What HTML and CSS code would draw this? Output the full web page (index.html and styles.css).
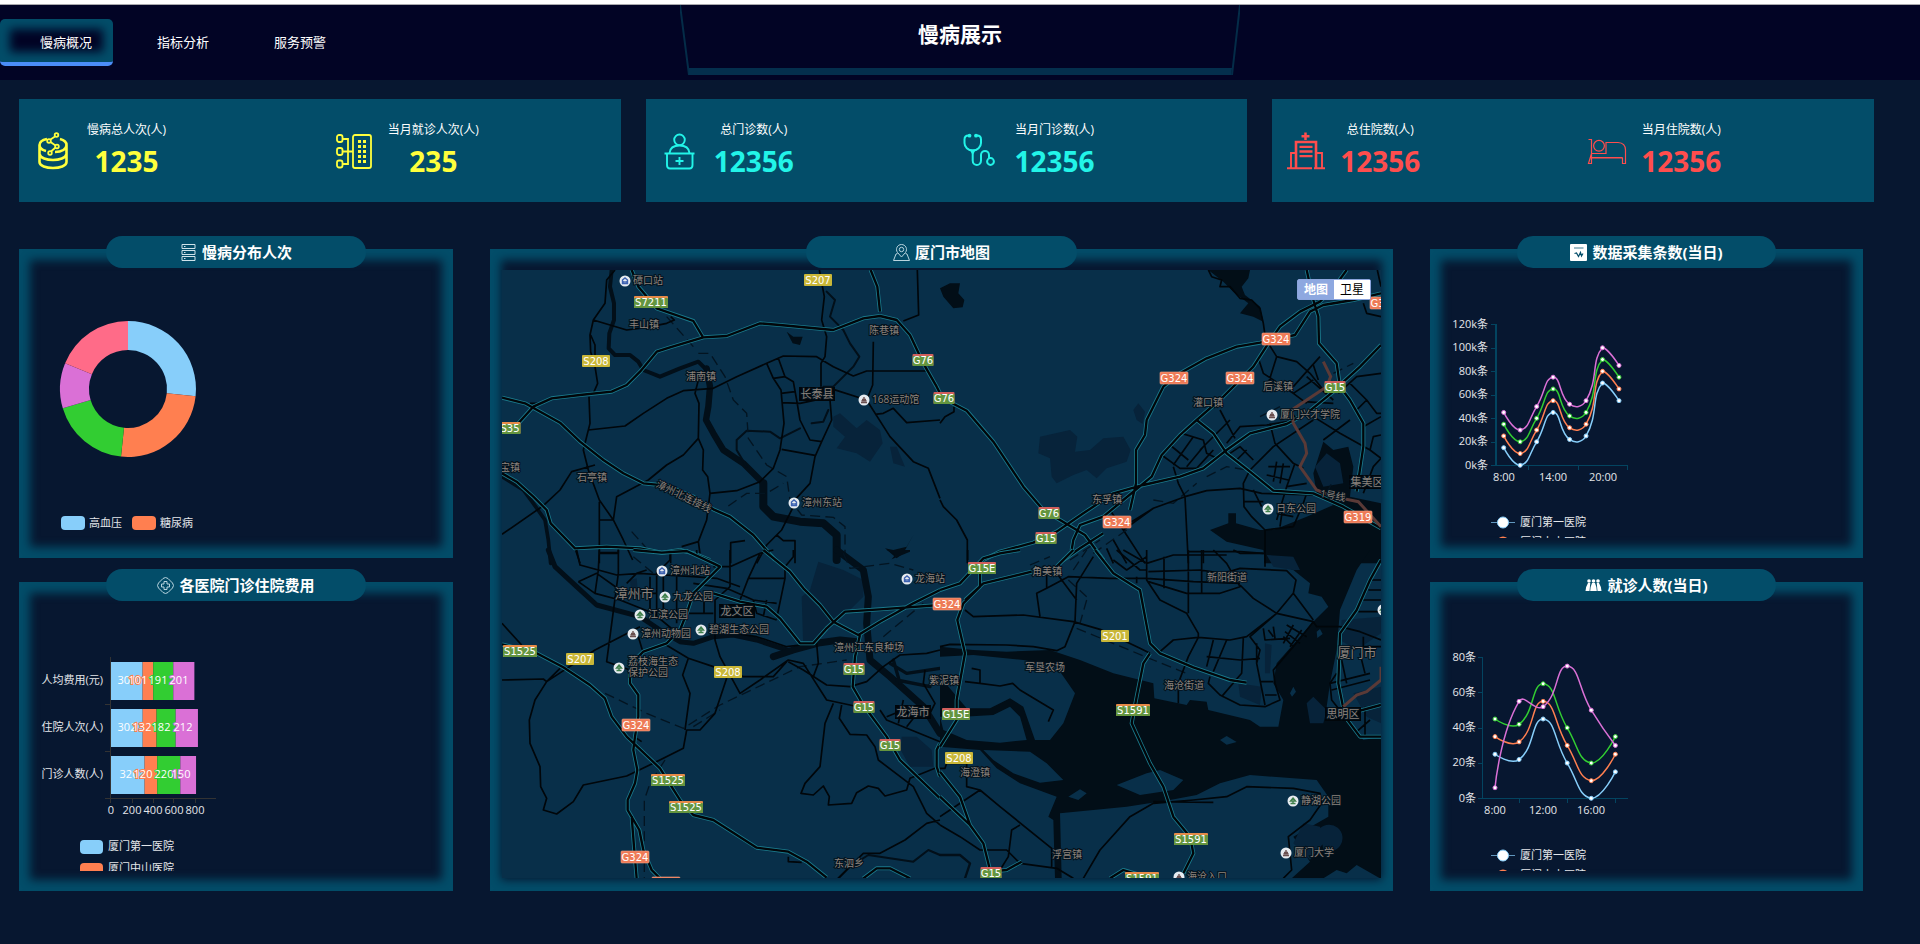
FILE: index.html
```html
<!DOCTYPE html>
<html lang="zh-CN">
<head>
<meta charset="utf-8">
<title>慢病展示</title>
<link rel="stylesheet" href="styles.css">
</head>
<body>
<header class="header">
  <nav class="nav">
    <a class="nav-item active" href="#overview">慢病概况</a>
    <a class="nav-item" href="#analysis">指标分析</a>
    <a class="nav-item" href="#warning">服务预警</a>
  </nav>
  <div class="banner">
    <svg class="banner-frame" viewBox="0 0 560 70" aria-hidden="true">
      <path d="M0 0 9 70M560 0 552 70" fill="none" stroke="#042c48" stroke-width="2"/>
      <path d="M9 63H552L551 70H9Z" fill="#042f4d"/>
    </svg>
    <h1 class="banner-title">慢病展示</h1>
  </div>
</header>

<main>
  <section class="stats">
    <div class="stat-card yellow">
      <div class="stat">
        <svg class="stat-icon" viewBox="0 0 40 40"><g fill="none" stroke="currentColor" stroke-width="2.6"><path d="M6.500 14V31C6.500 39 33.500 39 33.500 31V14M6.500 23C8 31 32 31 33.500 23M14 8C9 9 6.500 11 6.500 14 6.500 17 9 19 13 20M27 8C31 9 33.500 11 33.500 14 33.500 18 29 21 22 21"/><g stroke-width="1.800"><circle cx="23.500" cy="4" r="1.800"/><circle cx="16" cy="10" r="1.800"/><circle cx="24" cy="15.500" r="1.800"/><circle cx="17" cy="22" r="1.800"/><path d="M22 5.500 17.500 8.500M17.500 11 22.500 14.500M22.500 16.500 18 20.500"/></g></g></svg>
        <div class="stat-text"><span class="stat-label">慢病总人次(人)</span><strong class="stat-value">1235</strong></div>
      </div>
      <div class="stat">
        <svg class="stat-icon" viewBox="0 0 40 40"><g fill="none" stroke="currentColor" stroke-width="1.800"><rect x="19" y="4" width="18" height="33" rx="2"/><rect x="3" y="4" width="5.500" height="7" rx="2"/><rect x="3" y="17" width="5.500" height="7" rx="2"/><rect x="3" y="29.500" width="5.500" height="7" rx="2"/><path d="M8.500 8H14V33H8.500M8.500 20.500H19"/></g><path d="M24 9h3v3h-3zM29 9h3v3h-3zM24 14h3v3h-3zM29 14h3v3h-3zM24 19h3v3h-3zM29 19h3v3h-3zM24 24h3v3h-3zM29 24h3v3h-3zM24 29h3v3h-3zM29 29h3v3h-3z" fill="currentColor"/></svg>
        <div class="stat-text"><span class="stat-label">当月就诊人次(人)</span><strong class="stat-value">235</strong></div>
      </div>
    </div>
    <div class="stat-card cyan">
      <div class="stat">
        <svg class="stat-icon" viewBox="0 0 40 40"><g fill="none" stroke="currentColor" stroke-width="1.900"><circle cx="19.500" cy="8.800" r="5.300"/><path d="M9.500 22C10 17 14 14.500 19.500 14.500S29 17 29.500 22M4.500 22.500H34.500M7 22.500V34Q7 37.500 10 37.500H29.500Q32.500 37.500 32.500 34V22.500M19.500 26V34M15.500 30H23.500"/></g></svg>
        <div class="stat-text"><span class="stat-label">总门诊数(人)</span><strong class="stat-value">12356</strong></div>
      </div>
      <div class="stat">
        <svg class="stat-icon" viewBox="0 0 40 40"><g fill="none" stroke="currentColor" stroke-width="2"><path d="M8.500 4.500Q4.500 4.500 4.500 8.500V12C4.500 16 8 19.500 12.700 19.500S21 16 21 12V8.500Q21 4.500 17 4.500M12.700 19.500V29.500C12.700 35.500 21 35.500 21 29.500V24C21 18.500 29 18.500 29 24V27"/><circle cx="30.500" cy="30.500" r="3.400"/></g><circle cx="9.500" cy="4.700" r="1.900" fill="currentColor"/><circle cx="16" cy="4.700" r="1.900" fill="currentColor"/><path d="M9.500 18.500H16L12.700 24Z" fill="currentColor"/></svg>
        <div class="stat-text"><span class="stat-label">当月门诊数(人)</span><strong class="stat-value">12356</strong></div>
      </div>
    </div>
    <div class="stat-card red">
      <div class="stat">
        <svg class="stat-icon" viewBox="0 0 40 40"><g fill="none" stroke="currentColor"><path d="M19.500 1.500V9M15.500 5.200H23.500" stroke-width="2.500"/><path d="M10 37V11H30V37" stroke-width="2.600"/><path d="M13.500 15.800H26.500M13.500 20.500H26.500M13.500 25.200H26.500" stroke-width="2.300"/><path d="M5 37V22H9M30 22H36V37M1 37.300H26M28 37.300H39" stroke-width="1.900"/></g></svg>
        <div class="stat-text"><span class="stat-label">总住院数(人)</span><strong class="stat-value">12356</strong></div>
      </div>
      <div class="stat">
        <svg class="stat-icon" viewBox="0 0 40 40"><g fill="none" stroke="currentColor" stroke-width="1.200"><path d="M1.500 8.500H4.500V26.500H35.500M4.500 22.500H19V11.500H31Q38.500 12 38.500 19V32.500H35.500V27H4.500V32.500H1.500Z"/><circle cx="12" cy="14.800" r="5.400"/></g></svg>
        <div class="stat-text"><span class="stat-label">当月住院数(人)</span><strong class="stat-value">12356</strong></div>
      </div>
    </div>
  </section>

  <section class="board">
    <div class="column">
      <article class="panel">
        <h2 class="panel-title"><svg class="title-icon" viewBox="0 0 17 17"><g fill="none" stroke="#cfe3ea"><path d="M2 .5H15V4.500H2ZM2 6.500H15V10.500H2ZM2 12.500H15V16.500H2ZM4 2.500H5.500M4 8.500H5.500M4 14.500H5.500"/></g></svg>慢病分布人次</h2>
        <svg class="chart">
          <g transform="translate(89 120)">
            <path fill="#87cefa" d="M0-68A68 68 0 0 1 67.600 7.300L38.800 4.200A39 39 0 0 0 0-39Z"/>
            <path fill="#ff7f50" d="M67.600 7.300A68 68 0 0 1-7 67.600L-4 38.800A39 39 0 0 0 38.800 4.200Z"/>
            <path fill="#32cd32" d="M-7 67.600A68 68 0 0 1-65.200 19.300L-37.400 11.100A39 39 0 0 0-4 38.800Z"/>
            <path fill="#da70d6" d="M-65.200 19.300A68 68 0 0 1-62.900-25.800L-36.100-14.800A39 39 0 0 0-37.400 11.100Z"/>
            <path fill="#ff6b88" d="M-62.900-25.800A68 68 0 0 1 0-68V-39A39 39 0 0 0-36.100-14.800Z"/>
          </g>
          <rect x="22" y="247" width="24" height="14" rx="4" fill="#87cefa"/><text x="50" y="258">高血压</text>
          <rect x="93" y="247" width="24" height="14" rx="4" fill="#ff7f50"/><text x="121" y="258">糖尿病</text>
        </svg>
      </article>
      <article class="panel">
        <h2 class="panel-title"><svg class="title-icon" viewBox="0 0 17 17"><g fill="none" stroke="#b9d5df"><path d="M6 1.500Q8.500-.5 11 1.500L15.500 6Q17.500 8.500 15.500 11L11 15.500Q8.500 17.500 6 15.500L1.500 11Q-.5 8.500 1.500 6Z"/><path d="M7 4.500H10V7H12.500V10H10V12.500H7V10H4.500V7H7Z"/></g></svg>各医院门诊住院费用</h2>
        <svg class="chart">
          <path d="M71.500 55V201M66 196.500H177M66 102.500H71M66 149.500H71M93.500 197V201M114.500 197V201M134.500 197V201M156.500 197V201" stroke="#333" fill="none"/>
          <g id="bars"></g>
          <g text-anchor="end"><text x="64" y="82">人均费用(元)</text><text x="64" y="129">住院人次(人)</text><text x="64" y="176">门诊人数(人)</text></g>
          <g text-anchor="middle"><text x="72" y="212">0</text><text x="93" y="212">200</text><text x="114" y="212">400</text><text x="135" y="212">600</text><text x="156" y="212">800</text></g>
          <rect x="41" y="238" width="23" height="14" rx="4" fill="#87cefa"/><text x="69" y="248">厦门第一医院</text>
          <rect x="41" y="261" width="23" height="14" rx="4" fill="#ff7f50"/><text x="69" y="270">厦门中山医院</text>
        </svg>
      </article>
    </div>

    <article class="panel map-panel">
      <h2 class="panel-title"><svg class="title-icon" viewBox="0 0 17 17"><g fill="none" stroke="#b9d5df"><path d="M8.500 13 4.500 8.500C2 5 4.500.500 8.500.500S15 5 12.500 8.500ZM4.500 9.500 3 10 .500 16.500H16.500L14 10 12.500 9.500"/><circle cx="8.500" cy="5.500" r="2.200"/></g></svg>厦门市地图</h2>
      <div class="map">
        <svg class="map-canvas" viewBox="0 0 879 608" preserveAspectRatio="xMidYMid slice">
          <defs>
            <g id="hwA"><path d="M66 533 135 550 240 608 300 665 370 720 430 760 490 790 560 797 640 830 700 868 750 890 820 945 885 1020M115 610 160 560 215 535 300 525 395 515 440 495 480 455 530 395 570 382 670 352 740 348 840 310 900 315 1060 330 1150 295 1200 288 1250 300 1290 345 1330 430 1370 500 1380 520M455 150 475 200 530 265 640 303 668 350M1172 150 1192 200 1200 275M66 760 110 785 160 830 200 870 212 910 285 985 380 980 480 985 545 998 600 990 640 1000 690 1020"/></g>
            <g id="hwB"><path d="M0 530 80 572 160 665 250 800 310 870 380 912 435 945 490 1020M130 1020 180 995 280 968 350 935 430 880 520 820 610 795 720 770 790 745 860 690 930 640 1040 612 1100 580 1180 515 1205 490 1260 440 1323 375M1100 150 1120 240 1135 290 1137 370 1190 430 1200 500 1230 540 1270 610 1270 680 1250 815M1220 150 1180 205 1140 245 1080 275 1020 320 985 370 940 440 850 530 770 600 720 645 665 705 635 770 550 840 490 890 420 915 400 960 395 990M1323 220 1240 240 1150 255 1110 275 1065 345 960 368 890 380 800 415 720 460 670 500 620 600 615 645 588 690 588 790 570 870M770 600 820 640 860 700 930 755 1000 812 1120 820 1210 860 1323 925M490 940 420 985 370 1020"/></g>
            <g id="hwC"><path d="M66 283 170 310 250 352 330 405 375 445 395 500 440 560 540 655 600 750 640 795 700 810 830 893 925 905 980 935 1040 983M460 0 545 8 620 3 700 40 720 50 680 90 640 130 620 190 600 240 560 280 490 305 465 330 450 365 450 400 475 435 475 500 465 560 460 600 472 660 465 700 443 750 443 780 478 840 490 900 515 960 540 985M455 800 462 890 470 985M700 130 780 155 860 170 900 205 960 280 1000 280 1040 235 1095 185 1200 178 1380 165M850 0 930 65 970 115 1020 165 1060 215 1135 255 1200 215 1300 160 1380 120M1140 255 1125 320 1118 410 1150 465 1220 560 1260 630 1380 745M1150 985 1190 955 1230 955 1290 985M1380 580 1370 600 1370 650 1380 680"/></g>
            <g id="hwD"><path d="M0 120 60 100 130 25 180 10 240 0M120 60V110L70 160 52 210 75 310 50 450V510L0 590M75 150 130 100 275 65M350 50 400 0M465 0 520 70 600 120 615 200 630 280 660 310 760 352 870 390 920 398M630 310 610 340 590 440 575 520 630 640 670 710 700 800 750 860 760 910 730 970M0 665 60 740 90 825 130 880 150 960M0 740 90 825M150 965 200 960 245 935M510 985 550 960 600 975M1323 30 1290 90 1250 180 1200 250 1195 400 1215 500 1260 560 1323 560M1230 490 1323 465"/></g>
          </defs>

          <g transform="translate(-22 -50) scale(.33333)">
            <g class="river"><path stroke-width="12" d="M395 150 390 200 402 250 402 300 388 340 386 385 405 405 450 405 475 425 490 450 540 470 600 445 655 425 680 450"/><path stroke-width="19" d="M680 445 690 500 685 560 678 600 700 640 730 690 790 730 850 790"/><path stroke-width="24" d="M850 790 850 860 880 890 960 905 1030 910 1070 945 1070 1020"/><path stroke-width="6" d="M1040 215 1065 240 1050 290 1090 330 1110 370 1138 410 1120 440 1060 500 1030 500M800 740 770 690 770 660 800 632 870 635 900 655 930 640 960 625M995 610 1030 605 1045 570"/><path stroke-width="11" d="M66 770 130 810 160 850 195 900 205 960 212 1030"/></g>
            <path class="water" d="M920 335 940 350 968 350 960 375 938 370ZM1215 985 1240 990 1280 980 1300 945 1270 1000 1250 1015Z"/>
            <path class="park" d="M1060 590 1080 580 1130 625 1160 600 1200 630 1208 670 1170 725 1130 700 1070 685 1095 650 1060 620ZM1230 680 1250 680 1275 740 1240 730Z"/>
            <path class="rail" d="M560 290 640 380M655 400H690L735 470 760 540 800 580 805 655 860 735 920 770 930 840 965 885 1060 892 1095 920V1000M745 858 800 820 860 820 910 790M455 935 500 985"/>
            <path class="road" d="M405 150 380 180 375 250 340 300 330 345 332 395 345 440 353 490 340 520M332 345 345 375 345 410M340 300 440 330 500 322 560 310 583 300 572 290M327 530 330 610 310 690 325 750 358 840 400 900 430 960 458 1020M325 630 435 618 490 580 560 535 610 512 700 505 770 470 860 430 910 408 1010 410 1060 440 1120 468 1160 453 1345 453M1018 150 1033 230 1025 300 1040 350 1035 410 1023 430 1023 500M655 480 645 520 657 550 655 655 670 690 668 750 683 770 690 820 680 900 655 965 605 980M655 655 610 705 560 735 505 780 410 830 400 900 358 900M690 820 770 812 840 785 880 745 900 690 912 610 903 510 880 475 860 430M895 415 915 470 880 475M915 470 940 485 950 540 960 600 990 660 1025 665M903 520 945 515M905 548 960 550 1030 535M1050 540 1055 600 1025 665 1005 710 990 790 940 845M905 688 1005 706M1060 508 1160 540 1230 650 1300 725 1345 745 1380 835M1180 365 1178 495 1160 540M1185 583 1210 580 1240 565 1280 608 1380 600M1312 150 1316 285 1270 303M66 943 190 857 240 810 275 755 345 735M940 860 905 930 860 975 830 1030M890 945 910 962 945 962 945 1030M752 1030V968L795 962M358 845V1030M358 1000H415V985M285 985 300 1030M572 1030V995M655 965 660 1000M150 550H190"/>
            <use href="#hwA" class="casing"/><use href="#hwA" class="core"/>
          </g>

          <g transform="translate(438 -50) scale(.33333)">
            <path class="water" d="M0 205 30 190 60 190 55 220 73 240 68 262 40 265 10 230ZM805 150H930L925 175 905 200 915 225 960 260 970 305 940 290 900 280 925 250 880 215 850 185ZM1120 760 1150 665 1180 690 1225 680 1240 740 1230 830 1323 850V1030H975L970 990 860 965 810 930 865 910V880H888V910L960 930 1000 930 1100 890 1180 855 1130 820Z"/>
            <path class="park" d="M300 650 390 630 412 650 405 695 450 690 490 655 550 650 572 690 560 725 500 745 470 775 440 750 400 765 350 790 335 770 330 715 295 700ZM580 570 595 550 615 575 608 612 590 600ZM1125 740 1160 700 1200 730 1210 790 1150 800Z"/>
            <path class="rail" d="M800 770 860 740 920 750 980 800M640 840 700 850 770 790M1180 460 1240 430M960 590 1020 560M1160 820 1175 790"/>
            <path class="road" d="M0 610 15 590 42 575V560M0 840 10 860 50 900 82 960V1030M805 150 815 170 845 180 840 200 870 200 900 235 935 240 960 265 970 310 975 345M985 370 1010 410 1070 425 1110 460 1150 510M955 415 970 460 1060 520 1100 550M1010 410 985 490M1140 410 1095 460 1060 500M1120 435 1135 480M840 570 885 655M1195 520 1250 470 1323 460M1230 490 1280 540 1310 580H1323M1280 540 1245 575M1090 545 1180 550M1120 590 1200 640 1290 690 1323 715M1230 600 1150 660M1120 600 1000 680 930 750M990 610 1005 670 1060 730 1090 745M1050 570 1070 600 980 615 900 620 860 670M665 705 720 745H770M725 640 790 660 800 700 830 715M690 675 745 720M760 650 700 735M790 680 740 740M820 690 770 745M870 600 780 690M700 740 715 790 735 830 740 930 745 1030M575 905 640 865 735 830 800 812 900 805 965 820 1120 825M930 750 910 790 912 860 935 890 975 930V1030M912 845H970M940 810 965 860M1065 730 1040 800 1010 900M985 740H1050M980 765 1045 780M1010 725 1000 785M1030 730 1020 790M550 930 615 1030M745 995 900 995 970 1000M520 960 560 1030M500 985 520 1030M790 990V1030M510 870 550 930 640 865M975 930 1060 920 1090 850 1100 820M1010 880 1060 890M1030 850 1020 920M1270 250 1280 280 1323 290M1312 150 1323 200M1040 800 1100 790M870 700 900 680 940 720M890 720 920 690M1270 620 1323 590M1290 690 1300 650 1323 645M1270 820 1300 740 1323 715M1100 470 1180 540M1060 520 1120 480"/>
            <path class="rail" d="M460 1000 560 930M390 1020 480 960"/>
            <use href="#hwB" class="casing"/><use href="#hwB" class="core"/>
            <path class="metro" d="M1150 425 1172 470 1160 500 1055 570 1060 610 1095 670 1100 700 1080 740 1130 810 1180 830 1255 845 1323 920"/>
          </g>

          <g transform="translate(-22 280) scale(.33333)">
            <path class="park" d="M1015 35 1090 60 1150 90 1150 140 1100 190 1060 220 970 300 965 140 990 120ZM1265 560 1310 560 1355 600 1360 650 1290 650 1262 600ZM450 90 470 85 475 140 455 150Z"/>
            <g class="river"><path stroke-width="15" d="M205 0 225 50 290 110 350 165 480 200 540 240 600 275 640 280 700 260 760 255 830 270 920 300"/><path stroke-width="21" d="M880 320 940 300 1020 278 1080 270 1130 275M1070 0 1150 60 1165 140 1160 220 1170 330 1230 380 1330 470 1380 550"/><path stroke-width="10" d="M1230 340 1280 370 1380 355M1250 390 1350 410M1240 330 1260 400"/><path stroke-width="6" d="M1075 985 1110 950 1165 915 1300 935 1345 900 1380 915"/></g>
            <path class="water" d="M1220 0 1245 15 1235 28 1290 5 1290 0Z"/>
            <path class="rail" d="M460 20 520 70M375 430 500 490 610 535 720 465 960 350 1100 330M555 630 510 700 493 750V985M640 530 720 480M1210 260 1330 160M1090 10 1110 55 1230 40 1300 60"/>
            <path class="road" d="M358 0 355 60 345 130M415 0V70L380 335 450 360M290 0 300 45 410 75 480 70 550 75 640 80 710 85 780 110M358 8H415M295 95 350 70 420 120 480 130H530M295 95 345 130 420 150 520 190 580 240M510 80V190M530 60V200M550 75V190M590 60V220M650 0V20M570 0V30L540 60M440 100 470 70 500 60M640 100 740 115 820 150 890 160M700 50H750L840 10 880 0M840 10 805 85 780 150M805 85H915L890 205M915 85V50L940 20V0M640 140 620 190H700M672 130V190M750 0V110L705 150V270L720 320 780 430 840 390 925 330 970 340 1040 450 1180 480M820 150 830 190 890 210M860 150 850 200M550 280 625 325 700 350 790 380H880L920 335M740 385 705 490 660 540H620L610 595 520 640 440 678 310 705 280 755 230 792 190 780 200 745 182 710 180 650 150 580 148 510 165 450 200 395 345 300 480 230M66 220 125 285M66 390 190 387 200 395 240 355M625 325 608 375 630 430 615 540M1060 460 1035 520 1020 650 975 700 963 730 1000 735 1030 708 1048 740 1045 765 1115 760 1130 728 1165 708 1195 715 1215 738 1280 720 1290 685 1365 655M1085 465 1078 505 1110 553 1160 555 1185 590 1195 630 1300 710 1340 790 1380 825M925 335 970 360 1040 405 1110 410 1160 395 1210 350 1260 315 1340 310 1380 300M700 240 830 260 920 290 960 285M1380 810 1340 820 1275 870 1200 910 1150 910 1075 985M1335 360 1330 400 1365 460 1345 500M1200 480 1220 510 1380 575M1270 450 1255 520M1320 480 1280 530M1220 500 1270 480M925 920V935L965 937M1010 280 1015 340 1000 380M470 565 485 575M475 260 487 300"/>
            <use href="#hwC" class="casing"/><use href="#hwC" class="core"/>
          </g>

          <g transform="translate(438 280) scale(.33333)">
            <path class="water" d="M0 290 100 300 200 305 330 300 420 330 520 370 640 400 643 445 740 465 750 450 800 455 805 480 930 510 960 530 1015 530 1030 450 1000 400 1010 340 1080 260 1125 210 1165 170 1145 140 1105 130 1110 100 1060 60 975 30V0H1290L1250 60 1200 180 1190 300 1170 400 1160 470 1230 520 1270 570 1323 560V985H1055L1110 935 1060 860 1165 800V740L1130 690 1060 685 930 675 840 700 770 735 690 750 560 770 360 790 365 985H345L340 810 325 800 350 740 240 700 170 655 120 600 0 590Z"/>
            <path class="land" d="M0 320 100 315 250 330 350 350 405 430 370 520 330 570H285L250 470 210 445 150 475 80 475 0 380ZM70 500 160 495 210 470 240 500 260 570 180 578 80 570 10 540 0 500ZM130 600 270 605 320 640 370 690 300 698 220 670 160 630ZM530 705 620 670 660 660 730 690 700 720 600 735ZM385 740 420 718 440 730 415 750ZM840 570 860 558 890 576 860 584ZM1050 430 1060 410 1068 425 1056 440ZM1130 245 1140 237 1148 252 1132 264ZM1150 985 1190 960 1220 970 1250 945 1320 985Z"/>
            <path class="park" d="M980 15 1060 20 1080 60 1060 60 1000 50ZM1100 460 1120 440 1160 480 1150 520 1110 520ZM1205 210 1323 200V250L1250 300 1200 270ZM895 400 965 410 960 465 900 440ZM1060 880 1090 820 1140 830 1150 880 1110 930ZM975 280 995 285 990 370 975 370ZM1240 430 1323 410V520L1280 500ZM1140 835A40 40 0 1 1 1150 900Z"/>
            <g class="river"><path stroke-width="7" d="M0 915H60L90 940 75 985"/></g>
            <path class="rail" d="M440 150 420 220M410 235 640 330 740 370M270 45 330 20M400 60 440 0M385 90 440 140"/>
            <path class="road" d="M83 0V30M0 290 30 283 200 285 280 290 350 302 375 290 405 215 410 100 460 20M75 180 100 200 250 195 400 215 480 238 600 295 630 310M320 75V115L290 130 300 200M320 115 385 80 510 85 620 85 760 95 900 100M350 70 410 150M95 355 120 360V400L75 395M120 400 180 408 218 400 240 420 340 480 325 515M620 0V90L660 150 740 190 775 250V265M672 20V115M745 0V190M785 0V130M620 40 700 15H860M625 65 780 60 850 70M625 95 740 130H840L900 110 860 40 820 0M880 0 900 10H975M520 30 560 60 620 20M530 0 600 60 620 60M550 0 620 40M590 80V100M850 70 900 55 1040 62 1068 90 1060 130 1010 190M900 105 940 145 1010 190 1120 215 1060 290 1000 360 1005 400 1020 450 975 470 900 465 840 435 805 400 810 380M1060 130 1120 210M660 305 700 270 775 262 870 270 920 260 1010 190M775 262 745 320 715 400V460M820 270 800 350M860 270 820 365M910 265 905 370 845 440M800 320 900 330 960 325M950 280V340L975 465M970 235 975 270 1050 265M1010 190 930 260 960 300 950 340M1000 230 1005 265M985 240 1000 260M1040 225 1100 260M1035 245 1080 280M1030 260 1060 290M1060 225 1030 280M1085 240 1050 290M960 395H1000M975 435H1010M975 0V50M1120 215 1130 230H1200L1260 245 1323 270M1255 185H1323M1270 150H1323M1285 120H1323M1295 90H1323M1270 260V290H1323M1170 400 1290 370M1175 420 1290 390M1205 330 1220 400M1260 310 1275 370M1190 370 1170 400 1175 450 1215 500M1275 470V560M1250 545 1290 510M80 640V710L120 720 30 780 0 800M120 720 180 770 335 895V950M0 825 60 860 120 900H200L240 940 350 955 400 985M240 825 215 840 205 920 180 960M430 985 480 900 570 800 640 760 760 750 860 740 920 710 1060 715 1140 730 1145 760 1110 810 1045 860 1055 960 1030 985M640 755 820 757M0 655 15 655 20 640 80 640"/>
            <use href="#hwD" class="casing"/><use href="#hwD" class="core"/>
            <path class="metro" d="M1323 350V390L1280 425 1250 435 1210 470"/>
          </g>
          <g id="map-labels"></g>
        </svg>
        <div class="map-type"><button class="map-btn on" type="button">地图</button><button class="map-btn" type="button">卫星</button></div>
      </div>
    </article>

    <div class="column">
      <article class="panel">
        <h2 class="panel-title"><svg class="title-icon" viewBox="0 0 17 17"><rect width="17" height="17" rx="1" fill="#fff"/><path d="M4 4H13.500" stroke="#7fa6b4" stroke-width="1.500"/><path d="M4.500 9.500 6.500 9 8.500 12.500 10.500 8.500 11.500 12 13 9.500" fill="none" stroke="#034d69" stroke-width="1.200"/></svg>数据采集条数(当日)</h2>
        <svg class="chart">
          <path class="axis" d="M46 55V197" stroke-width="2"/>
          <path class="axis" d="M41 55.500H46M41 79.500H46M41 102.500H46M41 126.500H46M41 149.500H46M41 173.500H46M41 196.500H178M78.500 197V201M128.500 197V201M177.500 197V201"/>
          <g text-anchor="end"><text x="38" y="59">120k条</text><text x="38" y="82">100k条</text><text x="38" y="106">80k条</text><text x="38" y="129">60k条</text><text x="38" y="153">40k条</text><text x="38" y="176">20k条</text><text x="38" y="200">0k条</text></g>
          <g text-anchor="middle"><text x="54" y="212">8:00</text><text x="103" y="212">14:00</text><text x="153" y="212">20:00</text></g>
          <g id="collect"></g>
          <path d="M41 253.500H65" stroke="#87cefa" opacity=".7"/><circle cx="53" cy="253.500" r="5.500" fill="#fff" stroke="#87cefa"/><text x="70" y="257">厦门第一医院</text>
          <circle cx="53" cy="274" r="5.500" fill="#fff" stroke="#ff7f50" stroke-width="2"/><text x="70" y="277">厦门中山医院</text>
        </svg>
      </article>
      <article class="panel">
        <h2 class="panel-title"><svg class="title-icon" viewBox="0 0 17 17"><g fill="#fff"><circle cx="4" cy="4" r="1.800"/><circle cx="8.500" cy="4" r="1.800"/><circle cx="13" cy="4" r="1.800"/><path d="M3 6H5.300L4.500 14H.500Q1 9 3 6ZM11.700 6H14Q16 9 16.500 14H12.500ZM7 6H10Q11.500 9 11.800 14H5.200Q5.500 9 7 6Z"/></g></svg>就诊人数(当日)</h2>
        <svg class="chart">
          <path class="axis" d="M32.500 55V197M28 55.500H33M28 90.500H33M28 126.500H33M28 161.500H33M28 196.500H178M69.500 197V201M117.500 197V201M165.500 197V201"/>
          <g text-anchor="end"><text x="26" y="59">80条</text><text x="26" y="94">60条</text><text x="26" y="129">40条</text><text x="26" y="164">20条</text><text x="26" y="200">0条</text></g>
          <g text-anchor="middle"><text x="45" y="212">8:00</text><text x="93" y="212">12:00</text><text x="141" y="212">16:00</text></g>
          <g id="visits"></g>
          <path d="M41 253.500H65" stroke="#87cefa" opacity=".7"/><circle cx="53" cy="253.500" r="5.500" fill="#fff" stroke="#87cefa"/><text x="70" y="257">厦门第一医院</text>
          <circle cx="53" cy="274" r="5.500" fill="#fff" stroke="#ff7f50" stroke-width="2"/><text x="70" y="277">厦门中山医院</text>
        </svg>
      </article>
    </div>
  </section>
</main>
<script src="charts.js"></script>
</body>
</html>
```
FILE: styles.css
```css
* { box-sizing: border-box; }

body {
  margin: 0;
  min-height: 100vh;
  background: #071730;
  color: #fff;
  font-family: "Open Sans", "Noto Sans CJK SC", sans-serif;
}

/* header */
.header {
  display: grid;
  grid-template-columns: 1fr 560px 1fr;
  height: 80px;
  border-top: 4px solid #fff;
  background: #020425;
  box-shadow: inset 0 1px #a9a9ad;
}
.nav { display: flex; gap: 4px; padding-top: 15px; align-items: flex-start; }
.nav-item {
  padding: 12px 21px 9px 40px;
  border-bottom: 4px solid transparent;
  border-radius: 5px;
  color: #fff;
  font-size: 13px;
  line-height: 22px;
  text-decoration: none;
  white-space: nowrap;
}
.nav-item.active {
  border-bottom-color: #4b8df8;
  box-shadow: inset 0 0 10px 10px #034d69;
}
.banner { position: relative; padding-top: 1px; }
.banner-frame { position: absolute; top: 1px; left: 0; width: 100%; height: 70px; }
.banner-title {
  position: relative;
  margin: 0;
  font-size: 21px;
  line-height: 58px;
  text-align: center;
}

/* summary cards */
.stats {
  display: grid;
  grid-template-columns: repeat(3, 1fr);
  gap: 25px;
  padding: 19px 46px 0 19px;
}
.stat-card {
  display: grid;
  grid-template-columns: 1fr 1fr;
  padding: 21px 0 20px;
  background: #034d69;
}
.stat { display: flex; align-items: center; gap: 14px; padding-left: 14px; }
.stat-icon { width: 40px; height: 40px; flex: none; }
.stat-text { display: flex; flex-direction: column; align-items: center; }
.stat-label { color: #fff; font-size: 12px; line-height: 20px; }
.stat-value { font-size: 28px; line-height: 42px; }
.yellow { color: #ffff3c; }
.cyan { color: #22f4e8; }
.red { color: #ff4d4d; }

/* panels */
.board {
  display: grid;
  grid-template-columns: 434fr 903fr 433fr;
  gap: 37px;
  padding: 47px 57px 53px 19px;
}
.column { display: flex; flex-direction: column; gap: 24px; min-width: 0; }
.panel {
  position: relative;
  padding: 20px;
  box-shadow: inset 0 0 10px 11px #034d69;
}
.panel-title {
  position: absolute;
  top: -13px;
  left: 20%;
  display: flex;
  justify-content: center;
  align-items: center;
  gap: 5px;
  width: 60%;
  margin: 0;
  border-radius: 16px;
  background: #034d69;
  font-size: 15px;
  line-height: 32px;
}
.title-icon { width: 17px; height: 17px; }
.chart { display: block; width: 100%; height: 269px; overflow: hidden; }
.chart text { fill: #e4e6ea; font-size: 11px; }
.axis { fill: none; stroke: #034460; }
.series { fill: none; stroke-width: 1.5; }
.chart .bar-label { fill: #fff; stroke-width: 2; paint-order: stroke; text-anchor: middle; }

/* map */
.map-panel { padding: 21px 12px 13px; }
.map-panel .panel-title { left: 35%; width: 30%; }
.map { position: relative; height: 608px; background: #082f49; }
.map-canvas { display: block; width: 100%; height: 100%; }
.water { fill: #020e17; }
.land { fill: #082f49; }
.park { fill: #07233a; }
.river { fill: none; stroke: #020f19; stroke-linejoin: round; stroke-linecap: round; }
.road { fill: none; stroke: #01060a; stroke-width: 5; stroke-linejoin: round; }
.rail { fill: none; stroke: #031421; stroke-width: 4; stroke-dasharray: 30 16; }
.casing { fill: none; stroke: #1a7a8c; stroke-width: 12; stroke-linejoin: round; }
.core { fill: none; stroke: #01060a; stroke-width: 7; stroke-linejoin: round; }
.metro { fill: none; stroke: #5a3a37; stroke-width: 9; }
.place { fill: #8b827c; stroke: #04121d; stroke-width: 2; paint-order: stroke; font-size: 10px; }
.place.county { font-size: 11px; }
.place.city { font-size: 13px; }
.badge-text { fill: #fff; font-family: "DejaVu Sans", sans-serif; font-size: 10px; text-anchor: middle; }
.map-type {
  position: absolute;
  top: 9px;
  right: 10px;
  display: flex;
  border: 1px solid #8ba4dc;
  border-radius: 2px;
}
.map-btn {
  padding: 0 6px;
  border: 0;
  background: #fff;
  color: #000;
  font-family: inherit;
  font-size: 12px;
  line-height: 19px;
}
.map-btn.on { background: #8ea8e0; color: #fff; font-weight: bold; }
```
FILE: charts.js
```js
const NS = 'http://www.w3.org/2000/svg';
const COLORS = ['#87cefa', '#ff7f50', '#32cd32', '#da70d6'];

function add(parent, tag, attrs, text) {
  const el = document.createElementNS(NS, tag);
  for (const k in attrs) el.setAttribute(k, attrs[k]);
  if (text !== undefined) el.textContent = text;
  parent.appendChild(el);
  return el;
}

// Smooth line whose control points stay inside the bounds of the series.
function smoothPath(pts) {
  const xs = pts.map(p => p[0]), ys = pts.map(p => p[1]);
  const clamp = (x, y) => [
    Math.max(Math.min(x, Math.max(...xs)), Math.min(...xs)),
    Math.max(Math.min(y, Math.max(...ys)), Math.min(...ys))
  ];
  let d = 'M' + pts[0].join(' ');
  let c0 = pts[0];
  for (let i = 1; i < pts.length; i++) {
    const p = pts[i], prev = pts[i - 1], next = pts[i + 1];
    let c1 = p, out = p;
    if (next) {
      const vx = next[0] - prev[0], vy = next[1] - prev[1];
      const a = Math.hypot(p[0] - prev[0], p[1] - prev[1]);
      const b = Math.hypot(next[0] - p[0], next[1] - p[1]);
      const r = b / (a + b);
      c1 = clamp(p[0] - vx * 0.5 * (1 - r), p[1] - vy * 0.5 * (1 - r));
      out = clamp(p[0] + vx * 0.5 * r, p[1] + vy * 0.5 * r);
    }
    d += 'C' + [...c0, ...c1, ...p].join(' ');
    c0 = out;
  }
  return d;
}

function lines(id, x0, dx, scale, rows) {
  const g = document.getElementById(id);
  rows.forEach((row, s) => {
    const pts = row.map((v, i) => [x0 + dx * i, 196.3 - v * scale]);
    add(g, 'path', { class: 'series', d: smoothPath(pts), stroke: COLORS[s] });
    pts.forEach(p => add(g, 'circle', { cx: p[0], cy: p[1], r: 2, fill: '#fff', stroke: COLORS[s] }));
  });
}

const base = [15, 0, 20, 45, 22, 25, 70, 55];
lines('collect', 53.7, 16.47, 1.175, [0, 10, 20, 30].map(n => base.map(v => v + n)));
lines('visits', 45, 24.07, 1.7625, [
  [25, 22, 45, 20, 0, 15],
  [35, 32, 55, 30, 10, 25],
  [45, 42, 65, 40, 20, 35],
  [6, 55, 52, 75, 50, 30]
]);

// value and label centre for each stacked segment
const bars = document.getElementById('bars');
const barLabels = [];
[
  [[301, 88], [101, 99], [191, 119], [201, 140]],
  [[302, 88], [132, 103], [182, 122], [212, 144]],
  [[320, 90], [120, 104], [220, 125], [150, 142]]
].forEach((row, r) => {
  let x = 72;
  row.forEach(([v, cx], s) => {
    const w = v * 0.105;
    add(bars, 'rect', { x, y: 60 + r * 47, width: w, height: 38, fill: COLORS[s] });
    barLabels.push([s, cx, 82 + r * 47, v]);
    x += w;
  });
});
barLabels.sort((a, b) => a[0] - b[0]).forEach(([s, x, y, v]) =>
  add(bars, 'text', { class: 'bar-label', x, y, stroke: COLORS[s] }, v));

const map = document.getElementById('map-labels');

// kind, x, y, text, rotation
[
  ['', 142, 54, '丰山镇'], ['', 382, 60, '陈巷镇'], ['', 199, 106, '浦南镇'],
  ['', 90, 207, '石亭镇'], ['', 8, 197, '宝镇'], ['', 182, 226, '漳州北连接线', 26],
  ['', 776, 116, '后溪镇'], ['', 706, 132, '灌口镇'], ['', 605, 229, '东孚镇'],
  ['', 831, 225, '1号线', 10], ['', 367, 377, '漳州江东良种场'], ['', 347, 593, '东泗乡'],
  ['', 442, 410, '紫泥镇'], ['', 545, 301, '角美镇'], ['', 725, 307, '新阳街道'],
  ['', 543, 397, '军垦农场'], ['', 682, 415, '海沧街道'], ['', 473, 502, '海澄镇'],
  ['', 565, 584, '浮宫镇'],
  ['county', 315, 124, '长泰县'], ['county', 865, 212, '集美区'], ['county', 235, 341, '龙文区'],
  ['county', 411, 442, '龙海市'], ['county', 841, 444, '思明区'],
  ['city', 132, 324, '漳州市'], ['city', 855, 383, '厦门市']
].forEach(([kind, x, y, text, rot]) => {
  if (kind === 'county') add(map, 'rect', { x: x - 18, y: y - 7, width: 36, height: 14, fill: '#01060a' });
  const attrs = { class: 'place ' + kind, x, y: y + 4, 'text-anchor': 'middle' };
  if (rot) attrs.transform = `rotate(${rot} ${x} ${y})`;
  add(map, 'text', attrs, text);
});

const POI = {
  rail: ['#3d62b0', 'M-2.500-1 0-3 2.500-1V2.500H-2.500ZM-1 0V2.500M1 0V2.500'],
  park: ['#3f7f4b', 'M0-3 2.500 0H-2.500ZM0 0V2.500M-2.500 2.500H2.500'],
  spot: ['#6b5050', 'M0-3V0M-2-.5H2M-3 2.500H3M-2.500.8H2.500']
};
// kind, circle x, circle y, text
[
  ['rail', 123, 11, '磹口站'], ['spot', 362, 130, '168运动馆'], ['rail', 292, 233, '漳州东站'],
  ['spot', 770, 145, '厦门兴才学院'], ['park', 766, 239, '日东公园'], ['rail', 160, 301, '漳州北站'],
  ['park', 163, 327, '九龙公园'], ['park', 138, 345, '江滨公园'], ['park', 199, 360, '碧湖生态公园'],
  ['spot', 131, 364, '漳州动物园'], ['rail', 405, 309, '龙海站'], ['park', 791, 531, '静湖公园'],
  ['spot', 784, 583, '厦门大学'], ['spot', 677, 607, '海沧入口'], ['park', 117, 398, ''],
  ['park', 881, 340, '']
].forEach(([kind, x, y, text]) => {
  add(map, 'circle', { cx: x, cy: y, r: 5.5, fill: '#e6ebf0' });
  add(map, 'path', { d: POI[kind][1], transform: `translate(${x} ${y})`, fill: 'none', stroke: POI[kind][0], 'stroke-width': 1.4 });
  if (text) add(map, 'text', { class: 'place', x: x + 8, y: y + 3 }, text);
});
add(map, 'text', { class: 'place', x: 126, y: 395 }, '荔枝海生态');
add(map, 'text', { class: 'place', x: 126, y: 406 }, '保护公园');

// road shields: text, x, y
const shield = (name, x, y) => {
  const w = { 3: 21, 4: 28, 5: 34 }[name.length];
  const national = name[0] === 'G';
  const box = { x: x - w / 2, y: y - 6, width: w, height: 12, rx: 1 };
  if (name.length === 4 && national && name !== 'G15E') {
    add(map, 'rect', { ...box, fill: '#ee7a56', stroke: '#f5a184', 'stroke-width': 0.6 });
  } else if (name.length === 4 && !national) {
    add(map, 'rect', { ...box, fill: '#c9b738' });
  } else {
    add(map, 'rect', { ...box, fill: national ? '#d05f5c' : '#e58a48' });
    add(map, 'rect', { ...box, y: y - 4, height: 10, fill: '#64953f' });
  }
  add(map, 'text', { class: 'badge-text', x, y: y + 4 }, name);
};
[
  ['S7211', 149, 32], ['S208', 94, 91], ['S207', 316, 10], ['G76', 421, 90], ['G76', 442, 128],
  ['S35', 8, 158], ['G324', 882, 33], ['G324', 774, 69], ['G324', 672, 108], ['G324', 738, 108],
  ['G15', 833, 117], ['G319', 856, 247], ['G76', 547, 243], ['G324', 615, 252], ['G15', 544, 268],
  ['S1525', 18, 381], ['S207', 78, 389], ['S208', 226, 402], ['G15', 352, 399], ['G15', 362, 437],
  ['G15', 388, 475], ['G324', 134, 455], ['S1525', 166, 510], ['S1525', 184, 537], ['G324', 133, 587],
  ['G324', 445, 334], ['G324', 164, 613], ['G15E', 480, 298], ['S201', 613, 366], ['S1591', 631, 440],
  ['G15E', 454, 444], ['S208', 457, 488], ['S1591', 689, 569], ['G15', 489, 603], ['S1591', 640, 608]
].forEach(s => shield(...s));
```
